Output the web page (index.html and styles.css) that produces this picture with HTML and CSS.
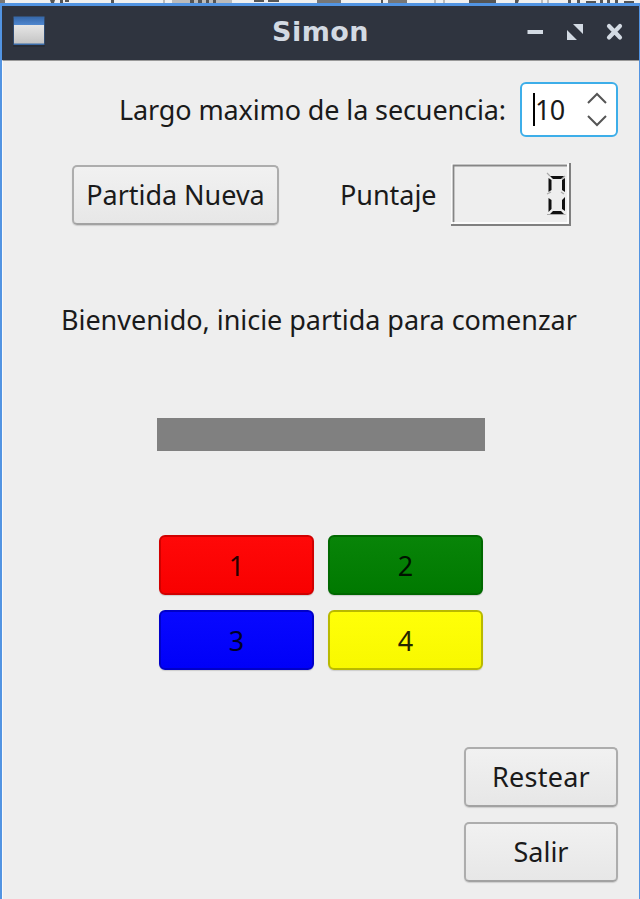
FILE: index.html
```html
<!DOCTYPE html>
<html lang="es">
<head>
<meta charset="utf-8">
<title>Simon</title>
<link rel="stylesheet" href="styles.css">
</head>
<body>
<div class="backdrop">
  <svg width="640" height="3" viewBox="0 0 640 3">
    <path fill="#777" d="M0 0h5v3H0zM317 0h24v3h-24zM388 0h19v3h-19z"/>
    <path fill="#bbb" d="M163 0h2v3h-2zM230 0h2v3h-2zM172 0h58v3h-58zM434 0h2v3h-2zM443 0h2v3h-2zM541 0h2v3h-2zM547 0h2v3h-2z"/>
    <path fill="#555" d="M50 0h5l-1 3h-3zM60 0h3v3h-3zM65 0h4v2h-4zM111 0h3v3h-3zM190 0h4v3h-4zM198 0h4v3h-4zM206 0h3v3h-3zM213 0h3v3h-3zM254 0h10v2h-10zM268 0h11v2h-11zM381 0h2v3h-2zM469 0h27v3h-27zM515 0h4l-1 3h-3zM568 0h3v3h-3zM577 0h3v3h-3zM586 1h10v2h-10zM600 0h3v3h-3zM607 0h3v3h-3zM615 0h3v3h-3zM624 1h10v2h-10z"/>
  </svg>
</div>
<div class="window">
  <header class="titlebar">
    <svg class="appicon" width="34" height="32" viewBox="0 0 34 32">
      <defs>
        <linearGradient id="blue" x1="0" y1="0" x2="0" y2="1"><stop offset="0" stop-color="#3668aa"/><stop offset="1" stop-color="#4f87cf"/></linearGradient>
        <linearGradient id="grey" x1="0" y1="0" x2="0" y2="1"><stop offset="0" stop-color="#e6e6e6"/><stop offset="1" stop-color="#c4c4c4"/></linearGradient>
      </defs>
      <rect x="1" y="2" width="32" height="29" rx="1" fill="#282c36"/>
      <rect x="1.500" y="0.500" width="31" height="28.500" fill="#3a6ba8"/>
      <rect x="2" y="1" width="30" height="8" fill="url(#blue)"/>
      <rect x="2" y="9" width="30" height="18.500" fill="url(#grey)"/>
    </svg>
    <h1 class="title">Simon</h1>
    <svg class="controls" width="98" height="20" viewBox="0 0 98 20" fill="#d3dae3">
      <rect x="0.500" y="8" width="15.500" height="4"/>
      <path d="M46 2h10v10zM40 8v10h10z"/>
      <path d="M82 4l11 11.500M93 4L82 15.500" stroke="#d3dae3" stroke-width="4.200" stroke-linecap="round"/>
    </svg>
  </header>
  <main class="content">
    <div class="row limit">
      <label class="text limit-label">Largo maximo de la secuencia:</label>
      <div class="spin">
        <span class="caret"></span><span class="text value">10</span>
        <svg class="arrows" width="22" height="36" viewBox="0 0 22 36" fill="none" stroke="#555" stroke-width="2"><path d="M2 11l9-9 9 9M2 24l9 9 9-9"/></svg>
      </div>
    </div>
    <div class="row game">
      <button class="button new"><span class="text">Partida Nueva</span></button>
      <span class="text score-label">Puntaje</span>
      <div class="lcd">
        <svg width="120" height="63" viewBox="0 0 120 63">
          <path d="M1 61V1.500H118" fill="none" stroke="#fff" stroke-width="1.500"/>
          <path d="M2.500 59V2.500H116" fill="none" stroke="#858585" stroke-width="1.800"/>
          <path d="M0 62H119V0" fill="none" stroke="#808080" stroke-width="2"/>
          <path d="M117 2V60H3" fill="none" stroke="#fff" stroke-width="1.500"/>
          <path d="M96 10l3 3M114 13l-3 3M96 31l4-2M113 31l-3-2M96 51.500h18.500" stroke="#aaa" stroke-width="1.200"/>
          <g fill="#111"><path d="M99 13h14l-3 3h-8zM97.500 15l3 2v10l-3 2zM114 15v14l-3-2V17zM97.500 35l3 2v9l-3 3zM114 34v14l-3-2v-9zM99 51l3-3h8l3 3z"/></g>
        </svg>
      </div>
    </div>
    <p class="text message">Bienvenido, inicie partida para comenzar</p>
    <div class="indicator"></div>
    <div class="pads">
      <button class="pad red"><span class="text">1</span></button>
      <button class="pad green"><span class="text">2</span></button>
      <button class="pad blue"><span class="text">3</span></button>
      <button class="pad yellow"><span class="text">4</span></button>
    </div>
    <div class="actions">
      <button class="button"><span class="text restart">Restear</span></button>
      <button class="button"><span class="text exit">Salir</span></button>
    </div>
  </main>
</div>
</body>
</html>
```
FILE: styles.css
```css
* { box-sizing: border-box; }
body { margin: 0; width: 640px; height: 899px; overflow: hidden; background: #eee; font-family: "Noto Sans", sans-serif; }
button { font: inherit; padding: 0; }
svg { display: block; }
.backdrop { height: 3px; overflow: hidden; background: #f0f0f0; }
.window { height: 896px; border: solid #5294e2; border-width: 3px 1px 0 2px; display: flex; flex-direction: column; }
.titlebar { height: 54px; flex: none; background: #2f343f; display: flex; align-items: center; padding: 0 14px 2px 10px; justify-content: space-between; }
.title { margin: 0 0 0 68px; font: bold 27px/50px "DejaVu Sans", sans-serif; letter-spacing: 0.5px; color: #d3dae3; }
.content { flex: 1; border-left: 1px solid #fafafa; border-top: 1px solid #999; background: #eee; padding: 21px 21px 0 18px; display: flex; flex-direction: column; }
.row { display: flex; align-items: center; }
.text { font-size: 27px; line-height: 36px; color: #1a1a1a; white-space: nowrap; letter-spacing: -0.04px; }
.limit { height: 55px; justify-content: flex-end; gap: 15px; }
.limit-label { width: 386px; letter-spacing: -0.12px; }
.spin { width: 98px; height: 55px; border: 2px solid #3daee9; border-radius: 6px; background: #fff; display: flex; align-items: center; padding: 0 8px 0 11px; }
.caret { width: 2px; height: 33px; background: #000; }
.value { flex: 1; letter-spacing: -0.6px; }
.game { margin-top: 26px; height: 63px; padding-left: 51px; }
.button { width: 154px; height: 60px; border: 2px solid #adadad; border-bottom-color: #a2a2a2; border-radius: 5px; background: linear-gradient(#f1f1f1, #e7e7e7); box-shadow: 0 1px 1px #ccc; }
.new { width: 207px; }
.score-label { width: 97px; margin-left: 61px; }
.lcd { margin-left: 14px; }
.message { margin: 76px 0 0 40px; }
.indicator { width: 328px; height: 33px; margin: 80px 0 0 136px; background: #808080; }
.pads { display: grid; grid-template-columns: 155px 155px; grid-auto-rows: 60px; gap: 15px 14px; margin: 84px 0 0 138px; }
.pad { border: 2px solid; border-radius: 6px; box-shadow: 0 1px 1px #ccc; }
.pad .text { color: #000; opacity: 0.85; position: relative; top: 1px; }
.red { background: linear-gradient(#ff0808, #f80000); border-color: #d00000; }
.green { background: linear-gradient(#088408, #007900); border-color: #006800; }
.blue { background: linear-gradient(#0808ff, #0000f8); border-color: #0000c8; }
.yellow { background: linear-gradient(#ffff08, #f8f800); border-color: #b9b900; }
.actions { margin-top: 77px; display: flex; flex-direction: column; align-items: flex-end; gap: 15px; }
.restart { letter-spacing: 0.25px; }
```
